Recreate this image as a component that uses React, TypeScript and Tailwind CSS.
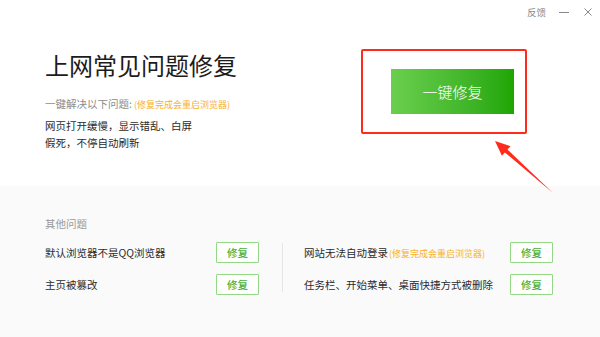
import React from 'react';

function FixButton() {
  return (
    <button className="w-[43px] h-[21px] border border-[#93d985] bg-white text-[#4caf38] text-[10.5px] leading-[19px] font-medium rounded-[1px]">
      修复
    </button>
  );
}

function Row({ label, note }: { label: string; note?: string }) {
  return (
    <div className="flex items-center justify-between h-[21px]">
      <span className="text-[10.5px] leading-[21px] text-[#2b2b2b]">
        {label}
        {note && <span className="ml-[1px] text-[9px] text-[#f8b12c]">{note}</span>}
      </span>
      <FixButton />
    </div>
  );
}

export default function App() {
  return (
    <div className="relative w-[600px] h-[337px] bg-white overflow-hidden font-['Noto_Sans_CJK_SC','Microsoft_YaHei',sans-serif]">
      {/* title bar */}
      <div className="h-[24px] flex items-center justify-end pr-[7px]">
        <span className="text-[9.5px] leading-[24px] text-[#8a8a8a] mr-[12px]">反馈</span>
        <svg width="12" height="12" viewBox="0 0 12 12" className="mr-[13px]">
          <line x1="1" y1="6.5" x2="11" y2="6.5" stroke="#888" strokeWidth="1" />
        </svg>
        <svg width="10" height="10" viewBox="0 0 10 10">
          <path d="M1.5 1.5 L8.5 8.5 M8.5 1.5 L1.5 8.5" stroke="#888" strokeWidth="1" />
        </svg>
      </div>

      {/* main */}
      <div className="h-[162px] flex items-start">
        <div className="w-[361px] pl-[45px] pt-[27px]">
          <h1 className="text-[24px] leading-[28px] text-[#1c1c1c] font-normal">上网常见问题修复</h1>
          <p className="mt-[17px] text-[10.5px] leading-[16px] text-[#8c8c8c]">
            一键解决以下问题:<span className="ml-[2px] text-[9px] text-[#f8b12c]">(修复完成会重启浏览器)</span>
          </p>
          <div className="mt-[4px] text-[10.5px] leading-[17px] text-[#2b2b2b]">
            <p>网页打开缓慢，显示错乱、白屏</p>
            <p>假死，不停自动刷新</p>
          </div>
        </div>
        <div className="mt-[25px] w-[166px] h-[85px] border-2 border-[#ff2b1c] rounded-[2px] pl-[28px] pt-[18px]">
          <button className="w-[123px] h-[45px] bg-linear-to-r from-[#69cf4d] to-[#1ea600] text-white text-[15px] leading-[45px] text-center font-light">
            一键修复
          </button>
        </div>
      </div>

      {/* other problems */}
      <div className="h-[151px] bg-[#fafafa] pl-[45px] pt-[31px]">
        <p className="text-[10.5px] leading-[14px] text-[#999]">其他问题</p>
        <div className="mt-[11px] flex items-start">
          <div className="w-[214px] flex flex-col gap-[11px]">
            <Row label="默认浏览器不是QQ浏览器" />
            <Row label="主页被篡改" />
          </div>
          <div className="ml-[23px] mt-[1px] w-px h-[49px] bg-[#e6e6e6]" />
          <div className="ml-[21px] w-[249px] flex flex-col gap-[11px]">
            <Row label="网站无法自动登录" note="(修复完成会重启浏览器)" />
            <Row label="任务栏、开始菜单、桌面快捷方式被删除" />
          </div>
        </div>
      </div>

      {/* red arrow annotation */}
      <svg width="70" height="62" viewBox="0 0 70 62" className="absolute left-[490px] top-[136px] pointer-events-none">
        <polygon points="5,5 20.5,10.2 17.5,13.5 63,57 14.9,16.5 11.9,19.8" fill="#ff2b1c" />
      </svg>
    </div>
  );
}
